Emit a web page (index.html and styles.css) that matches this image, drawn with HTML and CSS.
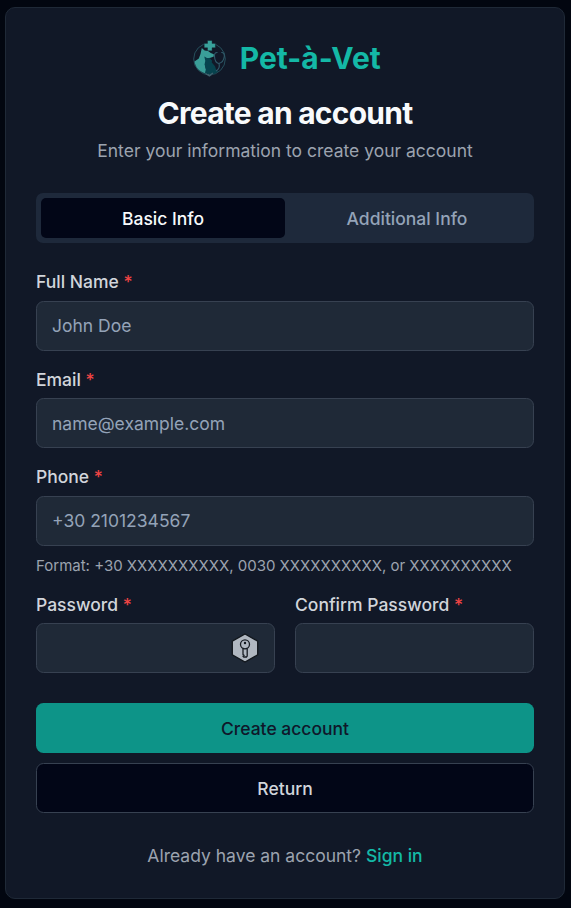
FILE: index.html
```html
<!DOCTYPE html>
<html lang="en">
<head>
<meta charset="utf-8">
<title>Pet-à-Vet – Create an account</title>
<link rel="stylesheet" href="styles.css">
</head>
<body>
<main class="card">
  <header class="header">
    <div class="brand">
      <svg class="logo" viewBox="0 0 36 38" aria-hidden="true">
        <circle cx="17.500" cy="20" r="15.800" fill="none" stroke="#264f5c" stroke-width="1"/>
        <path d="M15.500 1.500h4.600v3h3.300v4.300h-3.300v3h-4.600v-3h-3.300V4.500h3.300z" fill="#39a29c" stroke="#111827" stroke-width=".4"/>
        <path d="M9.800 9l2.800 2.400 3.400.6 2.800 2 3 1.300v2.200l-3.300 1.300-3 .4-2.500 5 .5 5 2 5.300C9 34 3.500 29.500 2.500 22.500l4.300-3 1.700-4.500z" fill="#3a9e98"/>
        <path d="M12.300 17.500l2.700 1.600 2.600-.1 2.400 2.500-.2 2 3.200 3.800 1.300 4 2.200.7c-2.300 2.400-5.500 3.500-8.500 3.500-2.400 0-4-.7-5-1.800l1-4-1.500-4.200.8-3.500z" fill="#07434e"/>
        <path d="M25.500 13.500c-2.500-.2-3.200 1.500-3 4 .2 3.500 1.500 6.500 4.300 7 3-.6 5-3.500 5.500-7 .3-2.500-.8-4.300-3-4M27 24.500c.8 3-.3 6-3 7.500" fill="none" stroke="#315b6b" stroke-width="1.100"/>
        <path d="M13.500 34.500l3.500 2.200 4-2.700M16 35l1.500 2 2-1.500" fill="none" stroke="#41616d" stroke-width="1.200"/>
      </svg>
      <span class="brand-name">Pet-à-Vet</span>
    </div>
    <h1 class="title">Create an account</h1>
    <p class="subtitle">Enter your information to create your account</p>
  </header>

  <div class="tabs" role="tablist">
    <button class="tab tab-active" type="button" role="tab">Basic Info</button>
    <button class="tab" type="button" role="tab">Additional Info</button>
  </div>

  <form class="form">
    <div class="field">
      <label class="label" for="name">Full Name <span class="required">*</span></label>
      <input class="input" id="name" type="text" placeholder="John Doe">
    </div>
    <div class="field">
      <label class="label" for="email">Email <span class="required">*</span></label>
      <input class="input" id="email" type="email" placeholder="name@example.com">
    </div>
    <div class="field">
      <label class="label" for="phone">Phone <span class="required">*</span></label>
      <input class="input" id="phone" type="tel" placeholder="+30 2101234567">
      <p class="hint">Format: +30 XXXXXXXXXX, 0030 XXXXXXXXXX, or XXXXXXXXXX</p>
    </div>
    <div class="passwords">
      <div class="field">
        <label class="label" for="password">Password <span class="required">*</span></label>
        <div class="input-wrap">
          <input class="input" id="password" type="password">
          <svg class="key" viewBox="0 0 28 30" aria-hidden="true">
            <path d="M14 1l12.700 7.100v13.800L14 29 1.300 21.900V8.100z" fill="#b0b7c0" stroke="#11161c" stroke-width="1.300"/>
            <g fill="none" stroke="#171c22" stroke-width="1.300">
              <circle cx="14" cy="11.300" r="4.500"/>
              <path d="M12 15.400v6.100l1 .8-1 .8.800.9h2.600l.8-.9v-7.700"/>
            </g>
            <circle cx="14" cy="10" r="1.200" fill="#11161c"/>
          </svg>
        </div>
      </div>
      <div class="field">
        <label class="label" for="confirm">Confirm Password <span class="required">*</span></label>
        <input class="input" id="confirm" type="password">
      </div>
    </div>
    <div class="actions">
      <button class="button button-primary" type="button">Create account</button>
      <button class="button button-outline" type="button">Return</button>
    </div>
  </form>

  <p class="footer">Already have an account? <a class="link" href="#">Sign in</a></p>
</main>
</body>
</html>
```

FILE: styles.css
```css
* {
  box-sizing: border-box;
}

body {
  margin: 0;
  padding: 7px 6px 9px 5px;
  height: 908px;
  background: #020610;
  color: #f8fafc;
  font-family: Inter, "Liberation Sans", sans-serif;
  font-size: 17.5px;
  line-height: 25px;
}

h1, p {
  margin: 0;
}

button, input {
  font: inherit;
}

.card {
  height: 892px;
  padding: 30px;
  border: 1px solid #1f2937;
  border-radius: 10px;
  background: #111827;
}

.header {
  text-align: center;
}

.brand {
  display: flex;
  align-items: center;
  justify-content: center;
  gap: 12px;
  height: 40px;
  padding-left: 2.5px;
}

.logo {
  width: 36px;
  height: 38px;
}

.brand-name {
  color: #14b8a6;
  font-size: 30px;
  font-weight: 700;
  line-height: 40px;
}

.title {
  margin-top: 15px;
  font-size: 30px;
  font-weight: 700;
  line-height: 40px;
  letter-spacing: -0.75px;
}

.subtitle {
  margin-top: 5px;
  color: #9ca3af;
}

.tabs {
  display: grid;
  grid-template-columns: 1fr 1fr;
  height: 50px;
  margin-top: 30px;
  padding: 5px;
  border-radius: 7px;
  background: #1e293b;
}

.tab {
  padding: 0;
  border: 0;
  border-radius: 5px;
  background: none;
  color: #94a3b8;
  font-weight: 500;
}

.tab-active {
  background: #020617;
  color: #f8fafc;
}

.form {
  display: flex;
  flex-direction: column;
  gap: 20px;
  margin-top: 30px;
}

.label {
  display: block;
  margin-bottom: 10px;
  color: #d1d5db;
  font-weight: 500;
  line-height: 17.5px;
}

.required {
  color: #ef4444;
}

.input {
  display: block;
  width: 100%;
  height: 50px;
  padding: 0 15px;
  border: 1px solid #374151;
  border-radius: 7.5px;
  background: #1f2937;
  color: #f8fafc;
}

.input::placeholder {
  color: #94a3b8;
  opacity: 1;
}

.hint {
  margin-top: 10px;
  color: #9ca3af;
  font-size: 15px;
  line-height: 20px;
}

.passwords {
  display: grid;
  grid-template-columns: 1fr 1fr;
  gap: 20px;
}

.input-wrap {
  position: relative;
}

.key {
  position: absolute;
  top: 10px;
  right: 16px;
  width: 28px;
  height: 30px;
}

.actions {
  display: grid;
  gap: 10px;
  margin-top: 10px;
}

.button {
  height: 50px;
  border: 1px solid transparent;
  border-radius: 7.5px;
  font-weight: 500;
}

.button-primary {
  border: 0;
  background: #0d9488;
  color: #0f172a;
}

.button-outline {
  border-color: #374151;
  background: #020617;
  color: #d1d5db;
}

.footer {
  margin-top: 30px;
  color: #9ca3af;
  text-align: center;
}

.link {
  color: #14b8a6;
  font-weight: 500;
  text-decoration: none;
}
```
